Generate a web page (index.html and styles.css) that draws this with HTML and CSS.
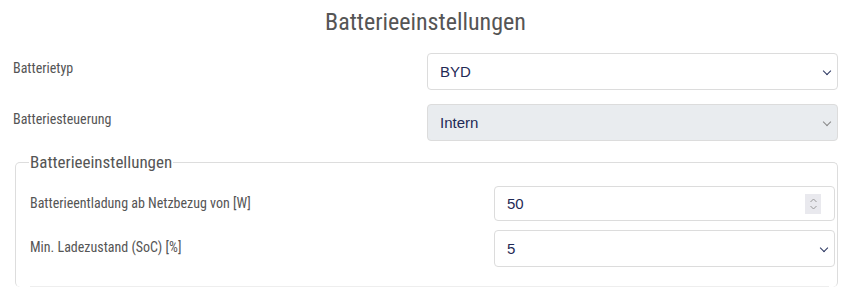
FILE: index.html
```html
<!DOCTYPE html>
<html lang="de">
<head>
    <meta charset="UTF-8">
    <meta name="viewport" content="width=device-width, initial-scale=1.0">
    <title>Batterieeinstellungen</title>
    <link rel="stylesheet" href="styles.css">
</head>
<body>
    <div class="page">
        <h1 class="page-title">Batterieeinstellungen</h1>

        <div class="form-row">
            <label class="form-label" for="battType">Batterietyp</label>
            <div class="select-wrap">
                <select id="battType" class="form-control">
                    <option>BYD</option>
                </select>
            </div>
        </div>

        <div class="form-row">
            <label class="form-label" for="battCtrl">Batteriesteuerung</label>
            <div class="select-wrap disabled">
                <select id="battCtrl" class="form-control" disabled>
                    <option>Intern</option>
                </select>
            </div>
        </div>

        <fieldset class="group">
            <legend>Batterieeinstellungen</legend>

            <div class="form-row inner">
                <label class="form-label" for="dischargeFrom">Batterieentladung ab Netzbezug von [W]</label>
                <div class="number-wrap">
                    <input id="dischargeFrom" class="form-control" type="text" value="50">
                    <span class="spinner">
                        <svg width="9" height="14" viewBox="0 0 9 14">
                            <path d="M1.5 5 L4.5 2 L7.5 5 M1.5 9 L4.5 12 L7.5 9" fill="none" stroke="#999" stroke-width="1"/>
                        </svg>
                    </span>
                </div>
            </div>

            <div class="form-row inner">
                <label class="form-label" for="minSoc">Min. Ladezustand (SoC) [%]</label>
                <div class="select-wrap">
                    <select id="minSoc" class="form-control tall">
                        <option>5</option>
                    </select>
                </div>
            </div>

            <hr class="divider">
        </fieldset>
    </div>
</body>
</html>
```

FILE: styles.css
```css
/* Global */
body {
    margin: 0;
    padding: 0;
    background: #fff;
    font-family: "Roboto Condensed", "Liberation Sans Narrow", "Roboto", sans-serif;
    color: #555;
}

.page {
    padding: 0 22px 0 13px;
}

.page-title {
    margin: 0;
    padding: 6px 0 15px;
    text-align: center;
    font-size: 24px;
    font-weight: 400;
    color: #555;
    line-height: 32px;
}

/* Rows */
.form-row {
    display: grid;
    grid-template-columns: 414px 1fr;
    align-items: start;
    margin-bottom: 14px;
}

.form-label {
    font-size: 14px;
    line-height: 20px;
    padding-top: 5px;
    color: #555;
}

/* Controls */
.form-control {
    width: 100%;
    box-sizing: border-box;
    height: 37px;
    padding: 0 12px;
    border: 1px solid #dcdcdc;
    border-radius: 4px;
    background: #fff;
    font-family: "Liberation Sans", Arial, sans-serif;
    font-size: 15px;
    color: #1f2a56;
    appearance: none;
    -webkit-appearance: none;
    outline: none;
}

.select-wrap,
.number-wrap {
    position: relative;
}

.select-wrap::after {
    content: "";
    position: absolute;
    right: 8px;
    top: 15px;
    width: 5px;
    height: 5px;
    border-right: 1.5px solid #2a3560;
    border-bottom: 1.5px solid #2a3560;
    transform: rotate(45deg);
    pointer-events: none;
}

.select-wrap.disabled .form-control {
    background: #e9ecef;
    color: #1f2a56;
    opacity: 1;
}

.select-wrap.disabled::after {
    border-color: #888;
    border-width: 0 1px 1px 0;
}

.spinner {
    position: absolute;
    right: 14px;
    top: 8px;
    width: 16px;
    height: 20px;
    background: #e9e9ee;
    display: flex;
    align-items: center;
    justify-content: center;
}

/* Fieldset */
.group {
    margin: -3px 0 0 2px;
    padding: 14px 2px 0 14px;
    border: 1px solid #ddd;
    border-radius: 5px;
    border-bottom: none;
}

.group legend {
    padding: 0 1px;
    margin-left: -1px;
    font-size: 17px;
    color: #555;
}

.form-row.inner {
    grid-template-columns: 464px 1fr;
    margin-bottom: 9px;
}

.form-row.inner .form-label {
    padding-top: 7px;
}

.form-row.inner .form-control {
    height: 35px;
}

.form-row.inner .form-control.tall {
    height: 37px;
}

.divider {
    margin: 19px 6px 0 0;
    border: none;
    border-top: 1px solid #eee;
}
```
